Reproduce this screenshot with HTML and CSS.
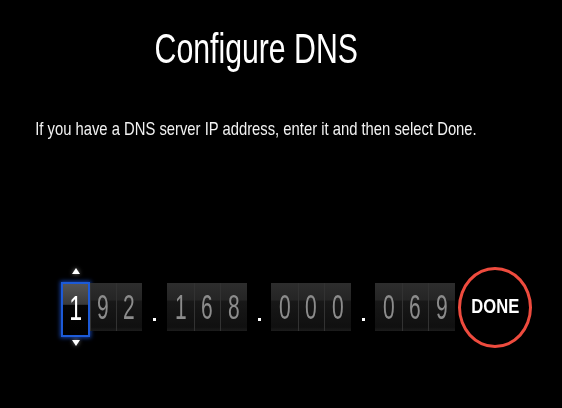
FILE: index.html
```html
<!DOCTYPE html>
<html lang="en">
<head>
    <meta charset="UTF-8">
    <meta name="viewport" content="width=device-width, initial-scale=1.0">
    <title>Configure DNS</title>
    <link rel="stylesheet" href="styles.css">
</head>
<body>
    <div class="screen">
        <div class="heading">
            <h1 class="title">Configure DNS</h1>
            <p class="hint">If you have a DNS server IP address, enter it and then select Done.</p>
        </div>

        <div class="ip-row">
            <div class="octet">
                <div class="picker">
                    <span class="arrow up"></span>
                    <div class="digit active"><span>1</span></div>
                    <span class="arrow down"></span>
                </div>
                <div class="digit"><span>9</span></div>
                <div class="digit"><span>2</span></div>
            </div>
            <div class="dot-gap"><span class="dot"></span></div>
            <div class="octet">
                <div class="digit"><span>1</span></div>
                <div class="digit"><span>6</span></div>
                <div class="digit"><span>8</span></div>
            </div>
            <div class="dot-gap narrow"><span class="dot"></span></div>
            <div class="octet">
                <div class="digit"><span>0</span></div>
                <div class="digit"><span>0</span></div>
                <div class="digit"><span>0</span></div>
            </div>
            <div class="dot-gap narrow"><span class="dot"></span></div>
            <div class="octet">
                <div class="digit"><span>0</span></div>
                <div class="digit"><span>6</span></div>
                <div class="digit"><span>9</span></div>
            </div>
            <button class="done" type="button"><span>DONE</span></button>
        </div>
    </div>
</body>
</html>
```

FILE: styles.css
```css
body {
    margin: 0;
    background: #000;
    color: #fff;
    font-family: "Liberation Sans", Arial, sans-serif;
}
.screen {
    width: 562px;
    height: 408px;
    overflow: hidden;
}
.heading {
    display: flex;
    flex-direction: column;
    align-items: center;
    width: 512px;
}
.title {
    margin: 25px 0 0;
    font-size: 42px;
    line-height: 48px;
    font-weight: normal;
    white-space: nowrap;
    transform: scaleX(0.72);
}
.hint {
    margin: 45px 0 0;
    font-size: 18.5px;
    line-height: 22px;
    color: #f2f2f2;
    white-space: nowrap;
    transform: scaleX(0.8);
}
.ip-row {
    display: flex;
    align-items: flex-start;
    margin-top: 127px;
    padding-left: 61px;
}
.octet {
    display: flex;
    align-items: flex-start;
    width: 80px;
}
.octet:first-child {
    width: 81px;
}
.digit {
    display: flex;
    justify-content: center;
    flex: 1;
    height: 48px;
    margin-top: 16px;
    line-height: 48px;
    font-size: 35px;
    color: #8c8c8c;
    background: linear-gradient(#2d2d2d, #252525 36%, #181818 37%, #101010 92%, #1c1c1c);
    box-shadow: inset 1px 0 0 #323232;
}
.digit span {
    display: inline-block;
    transform: scaleX(0.6);
}
.octet .digit:first-child {
    box-shadow: none;
}
.picker {
    display: flex;
    flex-direction: column;
    align-items: center;
    width: 29px;
}
.picker .digit {
    flex: none;
    box-sizing: border-box;
    width: 29px;
    height: 55px;
    margin-top: 8px;
    color: #fff;
    border: 2px solid #1c5ad8;
    background: linear-gradient(#555, #3a3a3a 40%, #050505 41%, #000);
    box-shadow: 0 0 4px 1px rgba(30, 90, 230, 0.7);
}
.picker .digit span {
    transform: scaleX(0.66);
}
.arrow {
    width: 0;
    height: 0;
    border-left: 4px solid transparent;
    border-right: 4px solid transparent;
    filter: drop-shadow(0 0 2px rgba(255, 255, 255, 0.5));
}
.arrow.up {
    margin-top: 1px;
    border-bottom: 6px solid #fff;
}
.arrow.down {
    margin-top: 3px;
    border-top: 6px solid #fff;
}
.dot-gap {
    display: flex;
    justify-content: center;
    width: 25px;
    padding-top: 51px;
}
.dot-gap.narrow {
    width: 24px;
}
.dot {
    width: 3px;
    height: 3px;
    background: #fff;
}
.done {
    box-sizing: border-box;
    width: 74px;
    height: 81px;
    margin-left: 3px;
    padding: 0 0 4px;
    border: 3px solid #ee4b3e;
    border-radius: 50%;
    background: transparent;
    color: #fff;
    font-family: "Liberation Sans", Arial, sans-serif;
    font-size: 21px;
    font-weight: bold;
}
.done span {
    display: inline-block;
    transform: scaleX(0.79);
}
```
